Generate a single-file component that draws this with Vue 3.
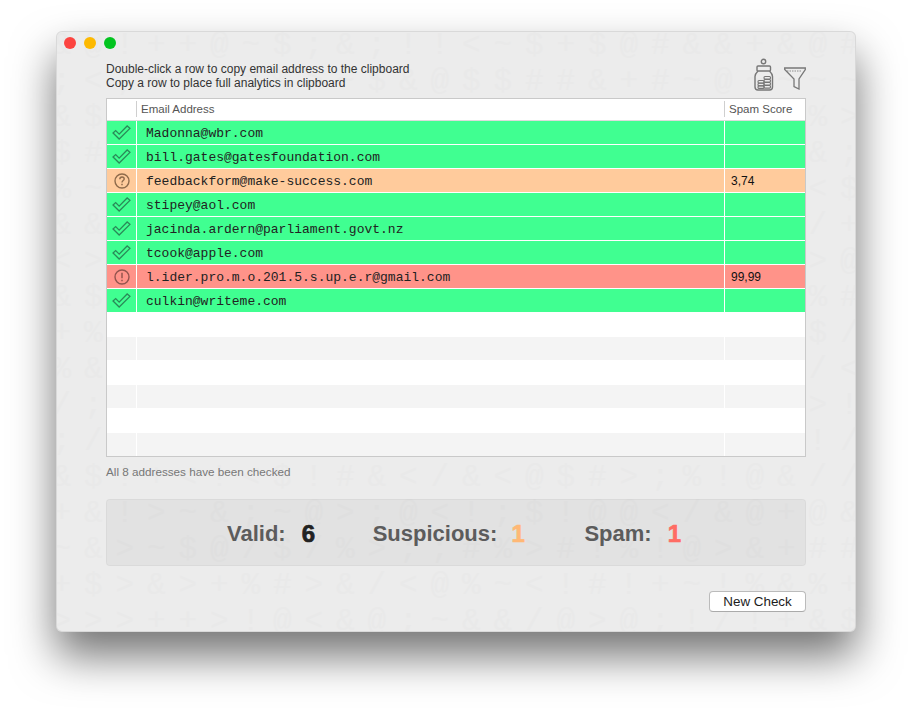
<template>
  <div class="page">
    <div class="window">
      <div class="glyphs">
        <template v-for="(row, r) in glyphRows" :key="r">
          <span v-for="(g, c) in row" :key="c">{{ g }}</span>
        </template>
      </div>

      <div class="titlebar">
        <i class="light red"></i>
        <i class="light yellow"></i>
        <i class="light green"></i>
      </div>

      <div class="toolbar">
        <div class="hint">
          <div>Double-click a row to copy email address to the clipboard</div>
          <div>Copy a row to place full analytics in clipboard</div>
        </div>
        <div class="tools">
          <svg class="jar" width="20" height="33" viewBox="0 0 20 33" fill="none" stroke="#777" stroke-width="1.4">
            <circle cx="9.5" cy="3.5" r="2.2" />
            <rect x="3" y="8" width="13.5" height="5" rx="1" />
            <path d="M4 13 C2 15 1 16 1 18.5 V29 C1 31 2 32 4 32 H15.5 C17.5 32 18.5 31 18.5 29 V18.5 C18.5 16 17.5 15 15.5 13" />
            <g stroke-width="1.1">
              <rect x="10" y="18.5" width="6.5" height="2.6" rx="1" />
              <rect x="10" y="21.5" width="6.5" height="2.6" rx="1" />
              <rect x="10" y="24.5" width="6.5" height="2.6" rx="1" />
              <rect x="10" y="27.5" width="6.5" height="2.6" rx="1" />
              <rect x="4" y="22.5" width="6" height="2.5" rx="1" />
              <rect x="4" y="25.2" width="6" height="2.5" rx="1" />
              <rect x="4" y="27.9" width="6" height="2.5" rx="1" />
            </g>
          </svg>
          <svg class="funnel" width="22" height="23" viewBox="0 0 22 23" fill="none" stroke="#777" stroke-width="1.3">
            <path d="M0.7 1 H21.3 V2.5 L15 12 V22 L10 19.5 V12 L0.7 2.5 Z" />
            <path d="M3 4 H17" stroke-dasharray="1.5 1" stroke-width="0.8" />
          </svg>
        </div>
      </div>

      <div class="table">
        <div class="thead">
          <div class="th"></div>
          <div class="th label">Email Address</div>
          <div class="th label">Spam Score</div>
        </div>
        <div v-for="(row, i) in rows" :key="i" class="row">
          <div class="cell icon" :class="row.status">
            <svg v-if="row.status === 'ok'" width="19" height="15" viewBox="0 0 20 16" fill="none" stroke="#2a8a58" stroke-width="1.4">
              <path d="M1 8.5 L3.8 6 L7.5 9.7 L16 1 L19 3.6 L7.5 15 Z" />
            </svg>
            <svg v-else-if="row.status === 'warn'" width="16" height="16" viewBox="0 0 16 16" fill="none" stroke="#8f6b4b" stroke-width="1.4">
              <circle cx="8" cy="8" r="7" />
              <path d="M5.8 6.2 C5.8 4.8 6.8 4 8 4 C9.3 4 10.2 4.9 10.2 6 C10.2 7.5 8 7.7 8 9.5" />
              <path d="M8 10.8 V12.2" stroke-width="1.5" />
            </svg>
            <svg v-else-if="row.status === 'bad'" width="16" height="16" viewBox="0 0 16 16" fill="none" stroke="#94544e" stroke-width="1.4">
              <circle cx="8" cy="8" r="7" />
              <path d="M8 3.8 V9.3" stroke-width="1.5" />
              <path d="M8 10.8 V12.3" stroke-width="1.5" />
            </svg>
          </div>
          <div class="cell email" :class="row.status"><span>{{ row.email }}</span></div>
          <div class="cell score" :class="row.status">{{ row.score }}</div>
        </div>
      </div>

      <div class="status">All {{ emails.length }} addresses have been checked</div>

      <div class="summary">
        <span class="sum-label">Valid:</span><span class="sum-num valid">6</span>
        <span class="sum-label">Suspicious:</span><span class="sum-num susp">1</span>
        <span class="sum-label">Spam:</span><span class="sum-num spam">1</span>
      </div>

      <div class="footer">
        <button class="new-check">New Check</button>
      </div>
    </div>
  </div>
</template>

<script setup>
// rows 2-11 sit behind the table, only the outer two columns ever show
const edge = (a, b, c, d) => [a, b, ...Array(22).fill(''), c, d]

const glyphRows = [
  '& @ ! + + @ ~ $ ; & ; ! ! < ~ $ + $ @ # & & + & @ #'.split(' '),
  '; < ; ~ ! + # % > ~ $ & @ $ $ # # & + # ~ @ ~ ~ ~ ~'.split(' '),
  edge('&', '$', '%', '>'),
  edge('$', '#', '&', ';'),
  edge('%', '~', '<', '$'),
  edge('&', '&', '/', '+'),
  edge('<', '>', '>', '@'),
  edge('&', '$', '%', '#'),
  edge('+', '%', '$', '/'),
  edge('%', '&', '/', '<'),
  edge('/', ';', '>', '!'),
  edge(';', '/', '!', '/'),
  '& $ ! + < ! < $ ! # & < / & < @ $ # > ; % ! @ & / /'.split(' '),
  '+ & ! > ~ & ; ~ @ > ; @ < ! ; $ ! @ @ < / & @ + @ &'.split(' '),
  '~ & > ~ $ @ / $ / % > ; ; # % > # ! % ! @ > & + # #'.split(' '),
  '+ $ > & > + % # > & / < @ % ~ < ! # ! + ~ ! % & % +'.split(' '),
  '> > > + + > ! @ < & @ ; ~ & & / @ > @ ; ! / ! + & $'.split(' ')
]

const emails = [
  { email: 'Madonna@wbr.com', status: 'ok', score: '' },
  { email: 'bill.gates@gatesfoundation.com', status: 'ok', score: '' },
  { email: 'feedbackform@make-success.com', status: 'warn', score: '3,74' },
  { email: 'stipey@aol.com', status: 'ok', score: '' },
  { email: 'jacinda.ardern@parliament.govt.nz', status: 'ok', score: '' },
  { email: 'tcook@apple.com', status: 'ok', score: '' },
  { email: 'l.ider.pro.m.o.201.5.s.up.e.r@gmail.com', status: 'bad', score: '99,99' },
  { email: 'culkin@writeme.com', status: 'ok', score: '' }
]

const blanks = [0, 1, 2, 3, 4, 5].map((n) => ({
  email: '',
  score: '',
  status: n % 2 ? 'odd' : 'even'
}))

const rows = [...emails, ...blanks]
</script>

<style scoped>
.page {
  width: 912px;
  height: 712px;
  padding: 31px 56px 0;
  box-sizing: border-box;
  overflow: hidden;
  background: #fff;
}
.window {
  position: relative;
  width: 800px;
  height: 601px;
  padding: 0 50px;
  box-sizing: border-box;
  background: #ececec;
  border-radius: 6px;
  box-shadow: 0 24px 44px rgba(0, 0, 0, 0.55), inset 0 0 0 1px rgba(0, 0, 0, 0.08);
  font-family: "Liberation Sans", Arial, sans-serif;
  color: #333;
}
.glyphs {
  position: absolute;
  inset: 0;
  display: grid;
  grid-template-columns: repeat(26, 31.5px);
  grid-auto-rows: 36px;
  margin: -3px 0 0 -10px;
  overflow: hidden;
  font-family: "Liberation Mono", monospace;
  font-size: 31px;
  line-height: 36px;
  text-align: center;
  color: #e9e9e9;
  pointer-events: none;
  clip-path: inset(4px 1px 1px 11px round 6px);
}
.titlebar {
  position: relative;
  height: 24px;
  display: flex;
  align-items: flex-start;
  gap: 8px;
  margin-left: -42px;
  padding-top: 6px;
  box-sizing: border-box;
}
.light { width: 12px; height: 12px; border-radius: 50%; }
.red { background: #fc4440; }
.yellow { background: #fdb900; }
.green { background: #02c41f; }
.toolbar {
  position: relative;
  height: 43px;
  display: flex;
  justify-content: space-between;
  align-items: flex-start;
}
.hint {
  margin-top: 7px;
  font-size: 12px;
  line-height: 14px;
  color: #333;
}
.tools { display: flex; gap: 10px; align-items: flex-start; margin-top: 3px; }
.funnel { margin-top: 9px; }
.table {
  position: relative;
  height: 359px;
  box-sizing: border-box;
  border: 1px solid #c9c9c9;
  background: #fff;
  overflow: hidden;
}
.thead, .row {
  display: grid;
  grid-template-columns: 29px 587px 80px;
  column-gap: 1px;
  background: #fff;
}
.thead {
  height: 22px;
  box-sizing: border-box;
  border-bottom: 1px solid #dcdcdc;
  padding: 2px 0 3px;
}
.th {
  font-size: 11.5px;
  line-height: 16px;
  color: #555;
}
.th.label {
  margin-left: -1px;
  padding-left: 4px;
  border-left: 1px solid #cfcfcf;
}
.row { height: 24px; padding-bottom: 1px; box-sizing: border-box; }
.cell {
  display: flex;
  align-items: center;
  min-width: 0;
  white-space: nowrap;
}
.icon { justify-content: center; }
.email {
  padding-left: 9px;
  font-family: "Liberation Mono", monospace;
  font-size: 13px;
  color: #222;
}
.email span { padding-top: 1px; }
.score {
  padding-left: 6px;
  font-size: 12px;
  color: #111;
}
.ok { background: #40ff91; }
.warn { background: #ffcb9c; }
.bad { background: #ff9389; }
.even { background: #fff; }
.odd { background: #f4f4f4; }
.status {
  position: relative;
  margin-top: 8px;
  font-size: 11.7px;
  line-height: 14px;
  color: #777;
}
.summary {
  position: relative;
  height: 67px;
  margin-top: 20px;
  padding: 3px 0 0 120px;
  box-sizing: border-box;
  display: flex;
  align-items: center;
  border: 1px solid rgba(0, 0, 0, 0.04);
  border-radius: 4px;
  background: rgba(0, 0, 0, 0.04);
  font-size: 22px;
  font-weight: 700;
}
.sum-label { color: #5c5c5c; margin-right: 16px; }
.sum-num {
  width: 16px;
  margin-right: 55px;
  font-size: 24px;
  -webkit-text-stroke: 0.7px currentColor;
}
.valid { color: #222; }
.susp { color: #ffb876; margin-left: -2px; width: 18px; }
.spam { color: #ff6c64; margin-right: 0; }
.footer {
  position: relative;
  margin-top: 25px;
  display: flex;
  justify-content: flex-end;
}
.new-check {
  width: 97px;
  height: 21px;
  padding: 0;
  background: #fff;
  border: 1px solid #bbb;
  border-bottom-color: #aaa;
  border-radius: 4px;
  font-family: "Liberation Sans", Arial, sans-serif;
  font-size: 13.4px;
  line-height: 19px;
  color: #1c1c1c;
}
</style>

<style>
html, body { margin: 0; background: #fff; }
</style>
